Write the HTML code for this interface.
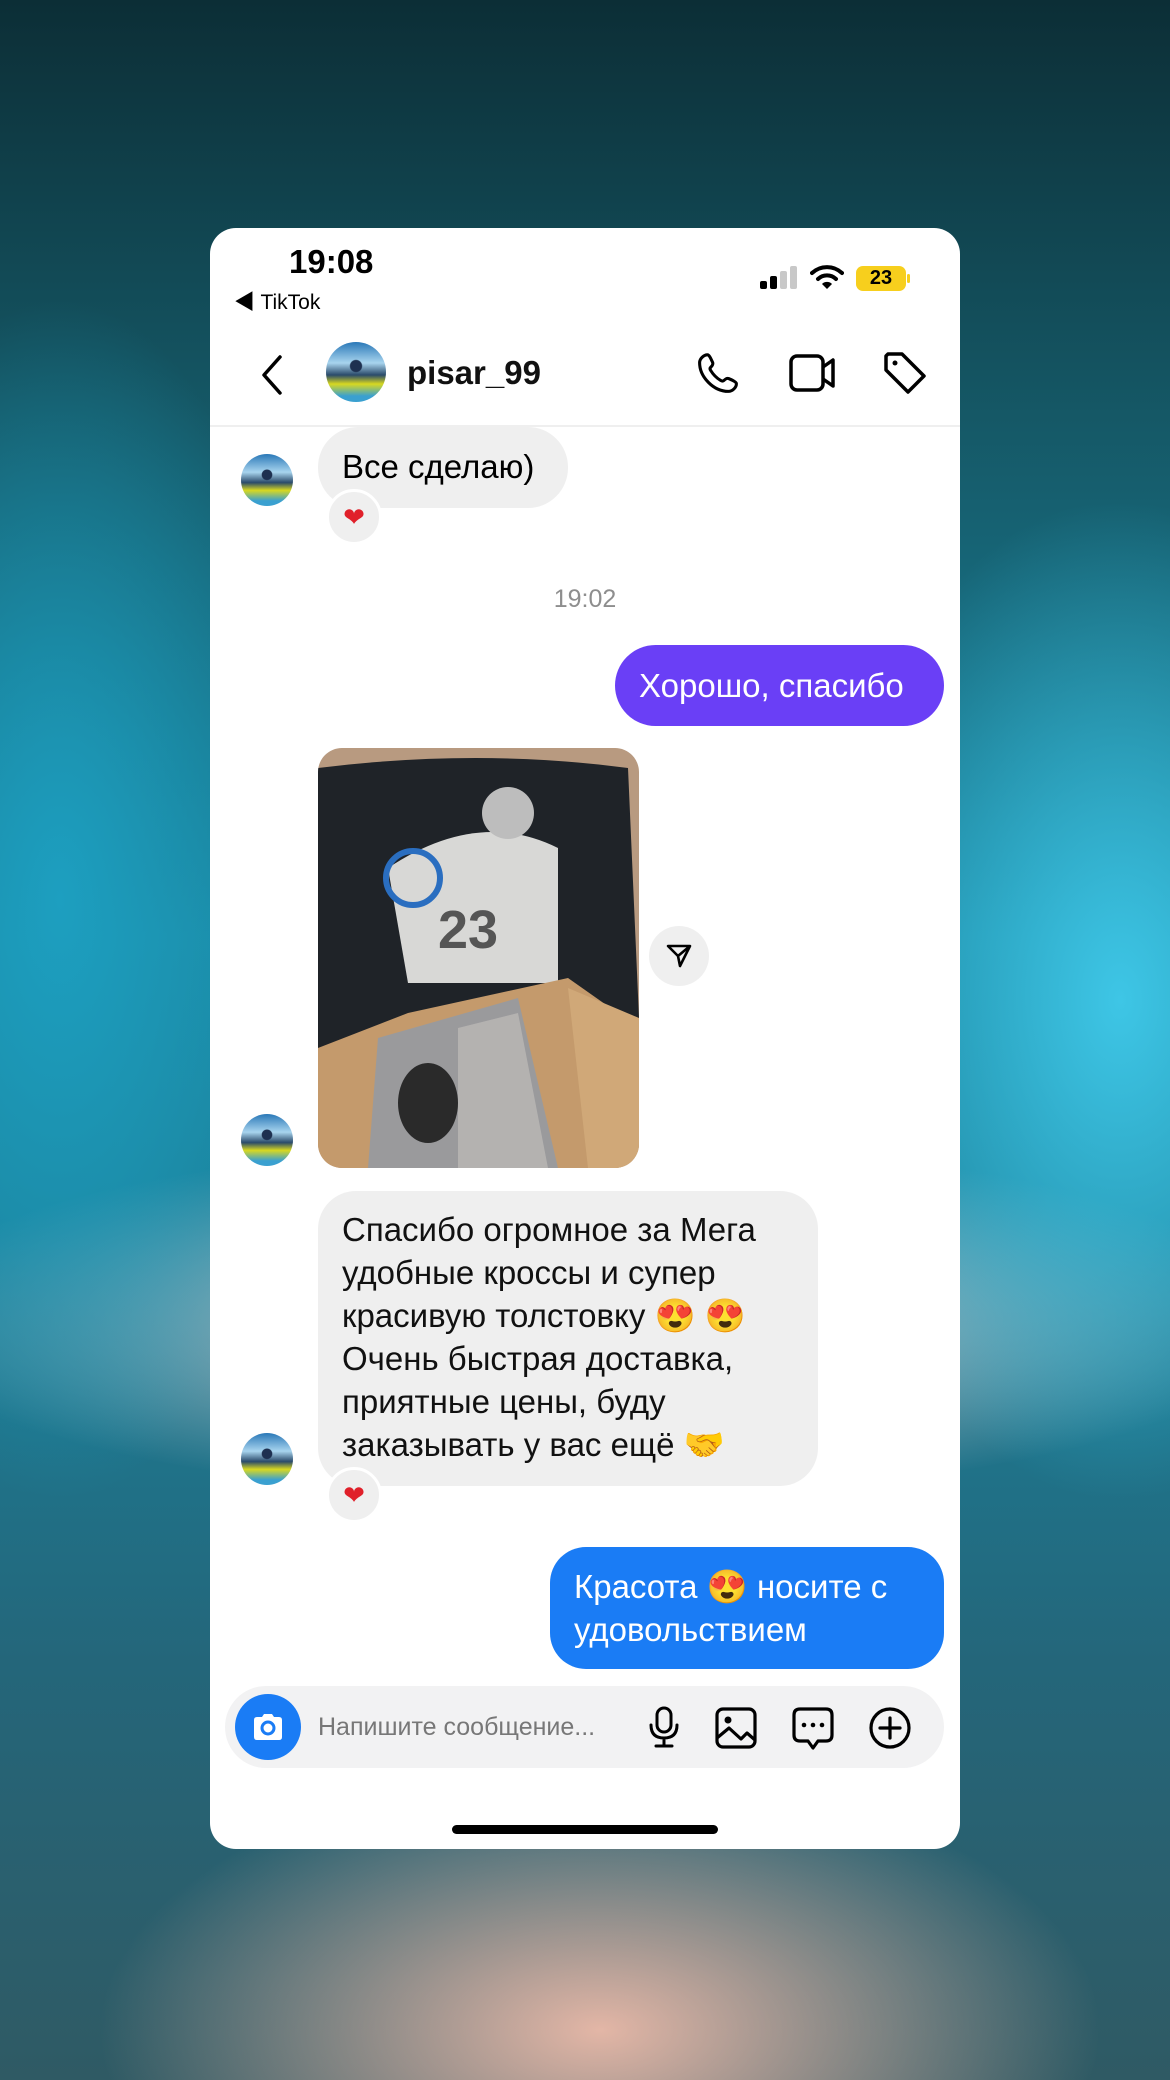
<!DOCTYPE html>
<html><head><meta charset="utf-8"><style>
*{margin:0;padding:0;box-sizing:border-box}
body{width:1170px;height:2080px;overflow:hidden;position:relative;font-family:"Liberation Sans","Noto Sans CJK SC",sans-serif;
background:
radial-gradient(ellipse 300px 500px at 1120px 1000px,#3ec6e6 0%,rgba(40,170,205,0) 100%),
radial-gradient(ellipse 260px 600px at 60px 900px,#1d9fc0 0%,rgba(20,120,150,0) 100%),
radial-gradient(ellipse 500px 260px at 600px 2030px,#e3b6a6 0%,rgba(200,150,140,0) 100%),
radial-gradient(ellipse 700px 180px at 585px 1320px,#c9ccd0 0%,rgba(180,190,200,0) 100%),
linear-gradient(180deg,#0c2e36 0%,#155866 20%,#1a86a0 45%,#1b7f98 60%,#24667a 80%,#2f5a64 100%);}
.card{position:absolute;left:210px;top:228px;width:750px;height:1621px;background:#fff;border-radius:26px;overflow:hidden}
.a{position:absolute}
.av{position:absolute;border-radius:50%;background:radial-gradient(circle at 50% 40%,#1e3050 0 12%,transparent 14%),linear-gradient(180deg,#2a78b8 0%,#a8d4ee 35%,#2a4a6a 55%,#d8d820 70%,#3aa0d0 90%)}
.bub{position:absolute;font-size:33px;line-height:43px}
.heart{position:absolute;width:56px;height:56px;border-radius:50%;background:#efefef;border:3px solid #fff;text-align:center;line-height:50px;font-size:26px;color:#e0202a}
</style></head><body>
<div class="card">
  <div class="a" style="left:79px;top:15px;font-size:33px;font-weight:bold;color:#000">19:08</div>
  <div class="a" style="left:24px;top:58px;font-size:21px;color:#000">◀ TikTok</div>
  <!-- signal -->
  <div class="a" style="left:550px;top:53px;width:7px;height:8px;background:#000;border-radius:2px"></div>
  <div class="a" style="left:560px;top:48px;width:7px;height:13px;background:#000;border-radius:2px"></div>
  <div class="a" style="left:570px;top:43px;width:7px;height:18px;background:#c8c8c8;border-radius:2px"></div>
  <div class="a" style="left:580px;top:38px;width:7px;height:23px;background:#c8c8c8;border-radius:2px"></div>
  <svg class="a" style="left:600px;top:36px" width="34" height="26" viewBox="0 0 34 26"><path d="M2 9 A22 22 0 0 1 32 9" stroke="#000" stroke-width="4" fill="none" stroke-linecap="round"/><path d="M8 15 A13 13 0 0 1 26 15" stroke="#000" stroke-width="4" fill="none" stroke-linecap="round"/><path d="M12 20 L17 25 L22 20 A7 7 0 0 0 12 20Z" fill="#000"/></svg>
  <div class="a" style="left:646px;top:38px;width:50px;height:25px;background:#f7cf1d;border-radius:7px;font-size:20px;font-weight:bold;text-align:center;line-height:25px">23</div>
  <div class="a" style="left:697px;top:46px;width:3px;height:9px;background:#f7cf1d;border-radius:2px"></div>
  <!-- header -->
  <svg class="a" style="left:48px;top:125px" width="30" height="44" viewBox="0 0 30 44"><path d="M22 4 L6 22 L22 40" stroke="#000" stroke-width="3.5" fill="none" stroke-linecap="round" stroke-linejoin="round"/></svg>
  <div class="av" style="left:116px;top:114px;width:60px;height:60px"></div>
  <div class="a" style="left:197px;top:126px;font-size:33px;font-weight:bold;color:#111">pisar_99</div>
  <svg class="a" style="left:485px;top:122px" width="46" height="46" viewBox="0 0 24 24"><path d="M6.5 2.5c1 0 2 2.5 2.7 4 .4 1-.3 1.8-1 2.5-.4.4-.5 1 0 1.7 1.4 2.3 3 3.9 5.2 5.2.7.4 1.3.4 1.7 0 .7-.7 1.5-1.4 2.5-1 1.5.7 4 1.7 4 2.7 0 1.9-2 4-4.2 4C9.8 21.6 2.4 14.2 2.4 6.6 2.4 4.5 4.6 2.5 6.5 2.5z" stroke="#000" stroke-width="1.6" fill="none" stroke-linejoin="round"/></svg>
  <svg class="a" style="left:578px;top:122px" width="48" height="46" viewBox="0 0 48 46"><rect x="3" y="6" width="32" height="34" rx="6" stroke="#000" stroke-width="3.5" fill="none"/><path d="M35 17 L45 10 V36 L35 29" stroke="#000" stroke-width="3.5" fill="none" stroke-linejoin="round"/></svg>
  <svg class="a" style="left:672px;top:122px" width="46" height="46" viewBox="0 0 46 46"><path d="M4 6 V20 L26 42 L42 26 L20 4 H6 Z" stroke="#000" stroke-width="3.5" fill="none" stroke-linejoin="round"/><circle cx="13" cy="13" r="2.5" fill="#000"/></svg>
  <div class="a" style="left:0;top:197px;width:750px;height:2px;background:#efefef"></div>
  <!-- msg1 -->
  <div class="av" style="left:31px;top:226px;width:52px;height:52px"></div>
  <div class="bub" style="left:108px;top:199px;width:250px;height:81px;background:#efefef;border-radius:40px;padding:18px 24px">Все сделаю)</div>
  <div class="heart" style="left:116px;top:261px">❤</div>
  <div class="a" style="left:0;width:750px;top:357px;text-align:center;font-size:25px;color:#8e8e8e">19:02</div>
  <div class="bub" style="left:405px;top:417px;width:329px;height:81px;background:#6a3ff6;border-radius:41px;color:#fff;padding:19px 24px">Хорошо, спасибо</div>
  <!-- image -->
  <svg class="a" style="left:108px;top:520px;border-radius:24px" width="321" height="420" viewBox="0 0 321 420">
    <rect width="321" height="420" fill="#b89a80"/>
    <path d="M0 20 Q160 0 310 20 L321 270 L210 280 L0 300Z" fill="#1f2328"/>
    <path d="M70 120 Q160 60 240 100 L240 235 L90 235Z" fill="#d8d8d6"/>
    <circle cx="190" cy="65" r="26" fill="#bdbdbd"/>
    <text x="120" y="200" font-size="54" font-weight="bold" fill="#555" font-family="Liberation Sans">23</text>
    <circle cx="95" cy="130" r="27" stroke="#2a6ec0" stroke-width="6" fill="none"/>
    <path d="M0 300 L90 265 L250 230 L321 280 L321 420 L0 420Z" fill="#c49a6c"/>
    <path d="M60 290 L200 250 L240 420 L50 420Z" fill="#9a9a9c"/>
    <path d="M140 280 L200 265 L230 420 L140 420Z" fill="#b4b2b0"/>
    <ellipse cx="110" cy="355" rx="30" ry="40" fill="#2a2a2a"/>
    <path d="M250 240 L321 270 L321 420 L270 420Z" fill="#d0a878"/>
  </svg>
  <div class="a" style="left:439px;top:698px;width:60px;height:60px;border-radius:50%;background:#efefef"></div>
  <svg class="a" style="left:455px;top:714px" width="28" height="28" viewBox="0 0 28 28"><path d="M3 4 H25 L15 24 L13 14 Z M13 14 L25 4" stroke="#000" stroke-width="2.6" fill="none" stroke-linejoin="round"/></svg>
  <div class="av" style="left:31px;top:886px;width:52px;height:52px"></div>
  <!-- big bubble -->
  <div class="bub" style="left:108px;top:963px;width:500px;height:295px;background:#efefef;border-radius:38px;padding:17px 24px;color:#111">Спасибо огромное за Мега удобные кроссы и супер красивую толстовку 😍 😍 Очень быстрая доставка, приятные цены, буду заказывать у вас ещё 🤝</div>
  <div class="heart" style="left:116px;top:1239px">❤</div>
  <div class="av" style="left:31px;top:1205px;width:52px;height:52px"></div>
  <div class="bub" style="left:340px;top:1319px;width:394px;height:122px;background:#1a7cf5;border-radius:36px;padding:18px 24px;color:#fff">Красота 😍 носите с удовольствием</div>
  <!-- input -->
  <div class="a" style="left:15px;top:1458px;width:719px;height:82px;background:#f2f2f3;border-radius:41px"></div>
  <div class="a" style="left:25px;top:1466px;width:66px;height:66px;border-radius:50%;background:#1a7cf5"></div>
  <svg class="a" style="left:40px;top:1481px" width="36" height="36" viewBox="0 0 36 36"><path d="M4 11 Q4 8 7 8 H12 L14 5 H22 L24 8 H29 Q32 8 32 11 V28 Q32 31 29 31 H7 Q4 31 4 28Z" fill="#fff"/><circle cx="18" cy="19" r="6" stroke="#1a7cf5" stroke-width="3" fill="none"/></svg>
  <div class="a" style="left:108px;top:1485px;font-size:25px;color:#777">Напишите сообщение...</div>
  <svg class="a" style="left:437px;top:1477px" width="34" height="44" viewBox="0 0 34 44"><rect x="10" y="3" width="14" height="24" rx="7" stroke="#000" stroke-width="3" fill="none"/><path d="M4 20 Q4 33 17 33 Q30 33 30 20 M17 33 V41 M9 41 H25" stroke="#000" stroke-width="3" fill="none" stroke-linecap="round"/></svg>
  <svg class="a" style="left:504px;top:1478px" width="44" height="44" viewBox="0 0 44 44"><rect x="3" y="3" width="38" height="38" rx="6" stroke="#000" stroke-width="3.2" fill="none"/><circle cx="14" cy="14" r="3.5" fill="#000"/><path d="M3 32 L15 22 L27 33 L33 27 L41 34" stroke="#000" stroke-width="3.2" fill="none" stroke-linejoin="round"/></svg>
  <svg class="a" style="left:581px;top:1478px" width="44" height="46" viewBox="0 0 44 46"><path d="M9 3 H35 Q41 3 41 9 V29 Q41 35 35 35 H27 L22 42 L17 35 H9 Q3 35 3 29 V9 Q3 3 9 3Z" stroke="#000" stroke-width="3.2" fill="none" stroke-linejoin="round"/><circle cx="13" cy="19" r="2.3" fill="#000"/><circle cx="22" cy="19" r="2.3" fill="#000"/><circle cx="31" cy="19" r="2.3" fill="#000"/></svg>
  <svg class="a" style="left:658px;top:1478px" width="44" height="44" viewBox="0 0 44 44"><circle cx="22" cy="22" r="19" stroke="#000" stroke-width="3.2" fill="none"/><path d="M22 12 V32 M12 22 H32" stroke="#000" stroke-width="3.2" stroke-linecap="round"/></svg>
  <div class="a" style="left:242px;top:1597px;width:266px;height:9px;background:#000;border-radius:5px"></div>
</div>
</body></html>
